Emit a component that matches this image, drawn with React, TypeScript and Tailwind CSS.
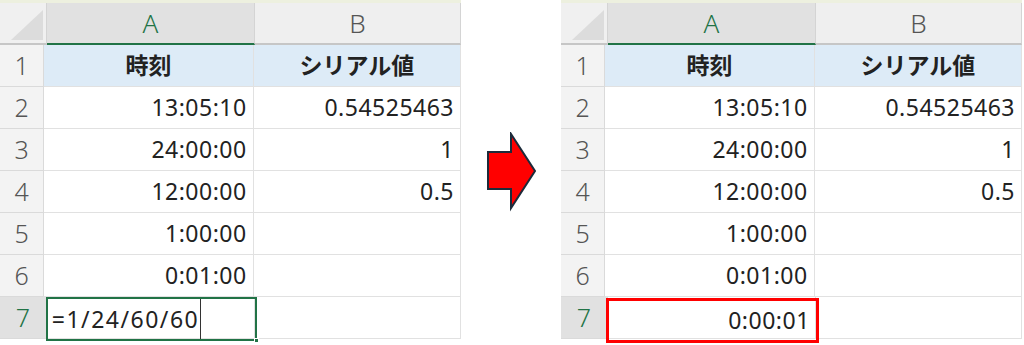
import React from "react";

const FONT = { fontFamily: '"Noto Sans", "Noto Sans CJK JP", sans-serif' };

type Row = { a: string; b: string; head?: boolean };

const rows: Row[] = [
  { a: "時刻", b: "シリアル値", head: true },
  { a: "13:05:10", b: "0.54525463" },
  { a: "24:00:00", b: "1" },
  { a: "12:00:00", b: "0.5" },
  { a: "1:00:00", b: "" },
  { a: "0:01:00", b: "" },
];

function Corner() {
  return (
    <div className="h-[40px] w-[46px] border-r border-[#d4d4d4] bg-[#f0f0f0] border-b-2 border-b-[#c6c6c6] box-content">
      <svg width="46" height="40" viewBox="0 0 46 40">
        <polygon points="43,7 43,37 11,37" fill="#dcdcdc" />
      </svg>
    </div>
  );
}

function Sheet({ editing }: { editing: boolean }) {
  return (
    <div className="w-[461px] shrink-0 bg-white" style={FONT}>
      <div className="h-[3px] bg-[#edf0df]" />
      {/* column headers */}
      <div className="flex h-[42px]">
        <Corner />
        <div className="flex h-[40px] w-[208px] items-center justify-center border-r border-[#d4d4d4] border-b-2 border-b-[#217346] bg-[#e1e1e1] text-[26px] font-light text-[#217346] box-content">
          A
        </div>
        <div className="flex h-[40px] w-[206px] items-center justify-center border-r border-[#d4d4d4] border-b-2 border-b-[#c6c6c6] bg-[#efefef] text-[26px] font-light text-[#555] box-content">
          B
        </div>
      </div>
      {rows.map((r, i) => (
        <div key={i} className="flex h-[42px]">
          <div className="flex w-[46px] items-center justify-center border-r border-b border-[#dadada] bg-[#f3f3f3] text-[25px] font-light text-[#555] box-content">
            {i + 1}
          </div>
          <div
            className={`flex w-[208px] items-center border-r border-b border-[#e1e1e1] px-[6px] text-[23px] text-[#222] box-content ${
              r.head ? "justify-center bg-[#ddebf7] font-bold" : "justify-end tracking-[0.5px]"
            }`}
          >
            {r.a}
          </div>
          <div
            className={`flex w-[206px] items-center border-r border-b border-[#e1e1e1] px-[6px] text-[23px] text-[#222] box-content ${
              r.head ? "justify-center bg-[#ddebf7] font-bold" : "justify-end tracking-[0.5px]"
            }`}
          >
            {r.b}
          </div>
        </div>
      ))}
      {/* row 7: the active cell */}
      <div className="flex h-[42px]">
        <div className="flex w-[46px] items-center justify-center border-r border-b border-[#dadada] bg-[#e1e1e1] text-[25px] font-light text-[#217346] box-content">
          7
        </div>
        <div className="relative w-[208px] border-r border-b border-[#e1e1e1] box-content">
          {editing ? (
            <div className="absolute left-[-1px] top-[0px] flex h-[44px] w-[211px] items-center border-2 border-[#217346] pl-[4px] text-[23px] text-[#222]">
              <span className="tracking-[1.5px]">=1/24/60/60</span>
              <span className="ml-[1px] h-[40px] w-[1px] bg-[#333]" />
              <span className="absolute bottom-[-4px] right-[-4px] h-[5px] w-[5px] border border-white bg-[#217346]" />
            </div>
          ) : (
            <div className="absolute left-[-2px] top-[1px] flex h-[45px] w-[213px] items-center justify-end border-[3px] border-[#ff0000] pr-[6px] text-[23px] tracking-[0.5px] text-[#222]">
              0:00:01
            </div>
          )}
        </div>
        <div className="w-[206px] border-r border-b border-[#e1e1e1] box-content" />
      </div>
    </div>
  );
}

function Arrow() {
  return (
    <svg width="54" height="80" viewBox="0 0 54 80">
      <polygon
        points="3,20 26,20 26,2 50,39 26,76 26,57 3,57"
        fill="#ff0000"
        stroke="#1c2b3a"
        strokeWidth="2"
        strokeLinejoin="miter"
      />
    </svg>
  );
}

export default function App() {
  return (
    <div className="flex h-[345px] w-[1024px] overflow-hidden bg-white">
      <Sheet editing />
      <div className="flex w-[100px] shrink-0 items-start justify-center pt-[132px] pl-[2px]">
        <Arrow />
      </div>
      <Sheet editing={false} />
    </div>
  );
}
